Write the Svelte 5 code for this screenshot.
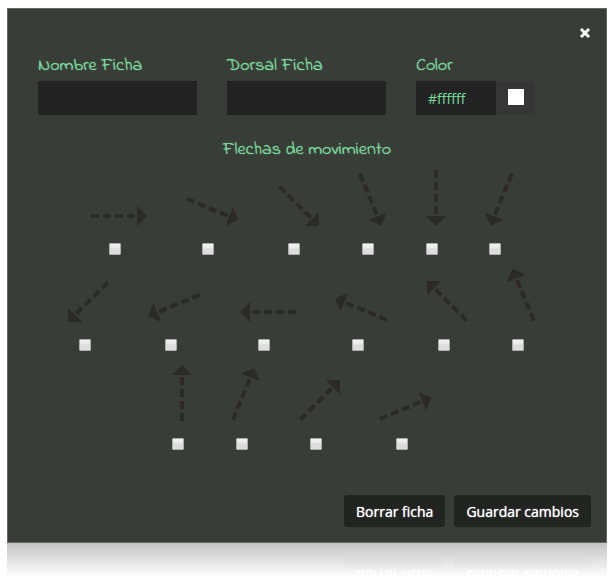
<script lang="ts">
	type Arrow = { angle: number; name: string; checked: boolean };

	const names = [
		'Derecha',
		'Derecha, algo abajo',
		'Abajo derecha',
		'Abajo, algo a la derecha',
		'Abajo',
		'Abajo, algo a la izquierda',
		'Abajo izquierda',
		'Izquierda, algo abajo',
		'Izquierda',
		'Izquierda, algo arriba',
		'Arriba izquierda',
		'Arriba, algo a la izquierda',
		'Arriba',
		'Arriba, algo a la derecha',
		'Arriba derecha',
		'Derecha, algo arriba'
	];

	let nombre = $state('');
	let dorsal = $state('');
	let color = $state('#ffffff');
	let open = $state(true);
	let arrows: Arrow[] = $state(
		names.map((name, i) => ({ angle: i * 22.5, name, checked: false }))
	);

	const rows = $derived([arrows.slice(0, 6), arrows.slice(6, 12), arrows.slice(12)]);

	// outline of the arrow before rotating: shaft end, head base, tip
	const outline = [
		[0, -2],
		[0, 2],
		[46, -10],
		[46, 10],
		[56, 0]
	];

	function bounds(angle: number) {
		const a = (angle * Math.PI) / 180;
		const xs = outline.map(([x, y]) => x * Math.cos(a) - y * Math.sin(a));
		const ys = outline.map(([x, y]) => x * Math.sin(a) + y * Math.cos(a));
		const x = Math.min(...xs);
		const y = Math.min(...ys);
		const width = Math.ceil(Math.max(...xs) - x - 0.1);
		const height = Math.ceil(Math.max(...ys) - y - 0.1);
		return { width, height, viewBox: `${x} ${y} ${width} ${height}` };
	}

	function clear() {
		nombre = '';
		dorsal = '';
		color = '#ffffff';
		arrows.forEach((arrow) => (arrow.checked = false));
	}
</script>

{#if open}
	<form class="modal" onsubmit={(e) => e.preventDefault()}>
		<header>
			<button type="button" class="close" aria-label="Cerrar" onclick={() => (open = false)}>
				<svg width="12" height="12" viewBox="0 0 12 12">
					<path d="M2 2 10 10M10 2 2 10" />
				</svg>
			</button>
		</header>

		<div class="fields">
			<div class="field">
				<label for="nombre">Nombre Ficha</label>
				<input id="nombre" type="text" bind:value={nombre} />
			</div>
			<div class="field">
				<label for="dorsal">Dorsal Ficha</label>
				<input id="dorsal" type="text" bind:value={dorsal} />
			</div>
			<div class="field">
				<label for="color">Color</label>
				<div class="picker">
					<input id="color" type="text" bind:value={color} />
					<input type="color" aria-label="Elegir color" bind:value={color} />
				</div>
			</div>
		</div>

		<fieldset>
			<legend>Flechas de movimiento</legend>
			{#each rows as row}
				<div class="row">
					{#each row as arrow (arrow.angle)}
						<label class="arrow">
							<svg {...bounds(arrow.angle)}>
								<g transform="rotate({arrow.angle})">
									<path class="shaft" d="M0 0H45" />
									<path class="head" d="M46 -10 56 0 46 10Z" />
								</g>
							</svg>
							<input type="checkbox" aria-label={arrow.name} bind:checked={arrow.checked} />
						</label>
					{/each}
				</div>
			{/each}
		</fieldset>

		<footer>
			<button type="button" class="action" onclick={clear}>Borrar ficha</button>
			<button type="submit" class="action">Guardar cambios</button>
		</footer>
	</form>

	<!-- fading mirror of the bottom of the window -->
	<div class="reflection" aria-hidden="true">
		<div class="mirror">
			<span class="action">Borrar ficha</span>
			<span class="action">Guardar cambios</span>
		</div>
	</div>
{/if}

<style>
	:global(body) {
		background: #fff;
	}

	.modal {
		box-sizing: border-box;
		margin: 8px 9px 0 7px;
		padding: 0 15px 15px;
		background: #393d37;
		border: 1px solid #656964;
		font-family: 'Open Sans', sans-serif;
	}

	header {
		display: flex;
		justify-content: flex-end;
		height: 45px;
	}

	.close {
		align-self: flex-start;
		margin-top: 13px;
		padding: 5px 0;
		background: none;
		border: 0;
		line-height: 0;
		cursor: pointer;
	}

	.close path {
		fill: none;
		stroke: #fff;
		stroke-width: 3;
	}

	.fields {
		display: flex;
		gap: 30px;
		padding: 0 15px;
	}

	.field label,
	legend {
		color: #7bdb9d;
		font-family: 'Indie Flower', 'Comic Neue', cursive;
		font-size: 18px;
		line-height: 24px;
		text-shadow: 0 0 1px #7bdb9d;
	}

	.field label {
		display: block;
		margin-bottom: 3px;
	}

	input {
		box-sizing: border-box;
		margin: 0;
	}

	input[type='text'] {
		display: block;
		width: 159px;
		height: 34px;
		padding: 0 12px;
		background: #232323;
		border: 0;
		border-radius: 0;
		color: #7bdb9d;
		font: 14px 'Open Sans', sans-serif;
	}

	.picker {
		display: flex;
	}

	.picker input[type='text'] {
		width: 80px;
	}

	input[type='color'] {
		appearance: none;
		width: 39px;
		height: 34px;
		padding: 8px 11px 10px 12px;
		background: #363636;
		border: 0;
		cursor: pointer;
	}

	input[type='color']::-webkit-color-swatch-wrapper {
		padding: 0;
	}

	input[type='color']::-webkit-color-swatch {
		border: 0;
		border-radius: 0;
	}

	fieldset {
		min-width: 0;
		margin: 23px 0 0;
		padding: 0;
		border: 0;
	}

	legend {
		width: 100%;
		margin-bottom: 8px;
		padding: 0;
		text-align: center;
	}

	.row {
		display: flex;
		justify-content: center;
		align-items: flex-end;
		gap: 39px;
		margin-bottom: 14px;
		padding-right: 10px;
	}

	.arrow {
		display: flex;
		flex-direction: column;
		align-items: center;
		gap: 17px;
		cursor: pointer;
	}

	.arrow svg {
		display: block;
	}

	.shaft {
		fill: none;
		stroke: #2c2a28;
		stroke-width: 4;
		stroke-dasharray: 8 4;
	}

	.head {
		fill: #2c2a28;
	}

	input[type='checkbox'] {
		appearance: none;
		width: 12px;
		height: 12px;
		margin-right: 8px;
		background: linear-gradient(#eee 0 30%, #dcdcdc 50%);
		border: 1px solid #adafac;
		border-radius: 1px;
	}

	input[type='checkbox']:checked {
		background: #7bdb9d;
	}

	footer,
	.mirror {
		display: flex;
		justify-content: flex-end;
		gap: 9px;
	}

	footer {
		margin-top: 31px;
	}

	.action {
		height: 32px;
		padding: 0 12px;
		background: #212421;
		border: 0;
		border-radius: 3px;
		color: #fff;
		font: 14px 'Open Sans', sans-serif;
		text-shadow: 0 0 1px #fff;
		cursor: pointer;
	}

	.reflection {
		height: 34px;
		margin: 0 9px 0 7px;
		overflow: hidden;
		background: #393d37;
		mask-image: linear-gradient(rgba(0, 0, 0, 0.3), transparent);
	}

	.mirror {
		padding: 0 16px 16px;
		transform: scaleY(-1);
	}

	.mirror .action {
		line-height: 32px;
	}
</style>
